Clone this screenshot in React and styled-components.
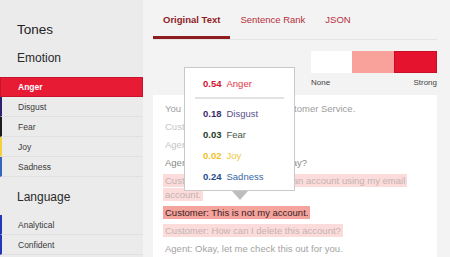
import React from "react";
import styled, { createGlobalStyle } from "styled-components";

const Global = createGlobalStyle`
  html, body { margin: 0; padding: 0; }
  body {
    font-family: "Liberation Sans", Arial, sans-serif;
    background: #f3f3f3;
    -webkit-font-smoothing: antialiased;
  }
`;

const Page = styled.div`
  position: relative;
  display: flex;
  width: 450px;
  height: 257px;
  overflow: hidden;
  background: #f3f3f3;
`;

const Sidebar = styled.aside`
  width: 143px;
  flex-shrink: 0;
  background: #ebebeb;
  padding-top: 22px;
  box-sizing: border-box;
`;

const Title = styled.h1`
  margin: 0 0 0 17px;
  font-size: 13.5px;
  line-height: 16px;
  font-weight: 400;
  color: #222;
`;

const Section = styled.h2`
  margin: ${(p) => p.$mt}px 0 ${(p) => p.$mb}px 17px;
  font-size: 12px;
  line-height: 14px;
  font-weight: 400;
  color: #2a2a2a;
`;

const ToneList = styled.ul`
  list-style: none;
  margin: 0;
  padding: 0;
`;

const Tone = styled.li`
  height: 20px;
  box-sizing: border-box;
  display: flex;
  align-items: center;
  padding-left: 16px;
  font-size: 8.5px;
  border-left: 2px solid ${(p) => (p.$active ? "#e41a32" : p.$bar)};
  border-bottom: 1px solid ${(p) => (p.$active ? "#c8142a" : "#e0e0e0")};
  background: ${(p) => (p.$active ? "#e71c34" : "transparent")};
  color: ${(p) => (p.$active ? "#fff" : "#3a3a3a")};
  font-weight: ${(p) => (p.$active ? 700 : 400)};
  ${(p) => (p.$active ? "border: 1px solid #c8142a; padding-left: 17px;" : "")}
`;

const Main = styled.main`
  flex: 1;
  display: flex;
  flex-direction: column;
  padding: 0 13px 0 10px;
  min-width: 0;
`;

const Tabs = styled.nav`
  display: flex;
  height: 39px;
  border-bottom: 1px solid #e3e3e3;
`;

const Tab = styled.div`
  box-sizing: border-box;
  height: 39px;
  padding: 14px 10px 0;
  font-size: 9.5px;
  line-height: 12px;
  color: ${(p) => (p.$active ? "#8e1b1f" : "#b5303a")};
  font-weight: ${(p) => (p.$active ? 700 : 400)};
  border-bottom: 3px solid ${(p) => (p.$active ? "#8e1b1f" : "transparent")};
`;

const Legend = styled.div`
  align-self: flex-end;
  width: 126px;
  margin-top: 11px;
`;

const Swatches = styled.div`
  display: flex;
  height: 22px;
`;

const Swatch = styled.div`
  flex: 1;
  box-sizing: border-box;
  background: ${(p) => p.$c};
  border: ${(p) => (p.$b ? `1px solid ${p.$b}` : "none")};
`;

const LegendLabels = styled.div`
  display: flex;
  justify-content: space-between;
  margin-top: 5px;
  font-size: 8px;
  line-height: 10px;
  color: #444;
`;

const Transcript = styled.div`
  flex: 1;
  margin-top: 7px;
  background: #fff;
  padding: 7px 12px;
`;

const Line = styled.p`
  margin: 0 0 4px;
  font-size: 9.5px;
  line-height: 14px;
  color: ${(p) => p.$c};
`;

const Mark = styled.span`
  background: ${(p) => p.$bg};
  padding: 1px 2px;
  margin: 0 -2px;
  -webkit-box-decoration-break: clone;
  box-decoration-break: clone;
`;

const Tooltip = styled.div`
  position: absolute;
  left: 184px;
  top: 67px;
  width: 111px;
  height: 124px;
  box-sizing: border-box;
  background: #fff;
  border: 1px solid #c9c9c9;
  padding: 9px 0 0;

  &::after {
    content: "";
    position: absolute;
    left: 47px;
    bottom: -10px;
    border-left: 8px solid transparent;
    border-right: 8px solid transparent;
    border-top: 9px solid #bdbdbd;
  }
`;

const Score = styled.div`
  display: flex;
  align-items: center;
  gap: 5px;
  padding-left: 18px;
  height: ${(p) => p.$h}px;
  font-size: 9.5px;
`;

const Value = styled.b`
  color: ${(p) => p.$c};
  font-weight: 700;
`;

const Label = styled.span`
  color: ${(p) => p.$c};
`;

const Divider = styled.hr`
  margin: 8px 10px 3.5px;
  border: none;
  height: 2px;
  background: #e2e2e2;
`;

const tones = [
  { name: "Anger", active: true },
  { name: "Disgust", bar: "#2b2270" },
  { name: "Fear", bar: "#1b1f1b" },
  { name: "Joy", bar: "#f2d13c" },
  { name: "Sadness", bar: "#3566bd" },
];

const language = [
  { name: "Analytical", bar: "#2238b8" },
  { name: "Confident", bar: "#2238b8" },
];

const scores = [
  { v: "0.18", n: "Disgust", vc: "#3b2c6c", lc: "#5b4f8c" },
  { v: "0.03", n: "Fear", vc: "#243a24", lc: "#465546" },
  { v: "0.02", n: "Joy", vc: "#f0bf2a", lc: "#f3c840" },
  { v: "0.24", n: "Sadness", vc: "#1f4c8e", lc: "#3868a8" },
];

export default function App() {
  return (
    <>
      <Global />
      <Page>
        <Sidebar>
          <Title>Tones</Title>
          <Section $mt={13} $mb={12}>Emotion</Section>
          <ToneList>
            {tones.map((t) => (
              <Tone key={t.name} $active={t.active} $bar={t.bar}>
                {t.name}
              </Tone>
            ))}
          </ToneList>
          <Section $mt={13} $mb={11}>Language</Section>
          <ToneList>
            {language.map((t) => (
              <Tone key={t.name} $bar={t.bar}>
                {t.name}
              </Tone>
            ))}
          </ToneList>
        </Sidebar>
        <Main>
          <Tabs>
            <Tab $active>Original Text</Tab>
            <Tab>Sentence Rank</Tab>
            <Tab>JSON</Tab>
          </Tabs>
          <Legend>
            <Swatches>
              <Swatch $c="#ffffff" />
              <Swatch $c="#f8a29b" />
              <Swatch $c="#e5132d" $b="#c80f26" />
            </Swatches>
            <LegendLabels>
              <span>None</span>
              <span>Strong</span>
            </LegendLabels>
          </Legend>
          <Transcript>
            <Line $c="#9d9d9d">You are now connected to Customer Service.</Line>
            <Line $c="#c4c4c4">Customer: Hi there.</Line>
            <Line $c="#c4c4c4">Agent: Hello, how are you?</Line>
            <Line $c="#8a8a8a">Agent: How can I help you today?</Line>
            <Line $c="#c3b3b3">
              <Mark $bg="#fbdcda">
                Customer: I am trying to open an account using my email account.
              </Mark>
            </Line>
            <Line $c="#3a2222">
              <Mark $bg="#f5a39d">Customer: This is not my account.</Mark>
            </Line>
            <Line $c="#c3b3b3">
              <Mark $bg="#fbdcda">Customer: How can I delete this account?</Mark>
            </Line>
            <Line $c="#a3a3a3">Agent: Okay, let me check this out for you.</Line>
          </Transcript>
        </Main>
        <Tooltip>
          <Score $h={12}>
            <Value $c="#d3152e">0.54</Value>
            <Label $c="#e2324a">Anger</Label>
          </Score>
          <Divider />
          {scores.map((s) => (
            <Score key={s.n} $h={21}>
              <Value $c={s.vc}>{s.v}</Value>
              <Label $c={s.lc}>{s.n}</Label>
            </Score>
          ))}
        </Tooltip>
      </Page>
    </>
  );
}
